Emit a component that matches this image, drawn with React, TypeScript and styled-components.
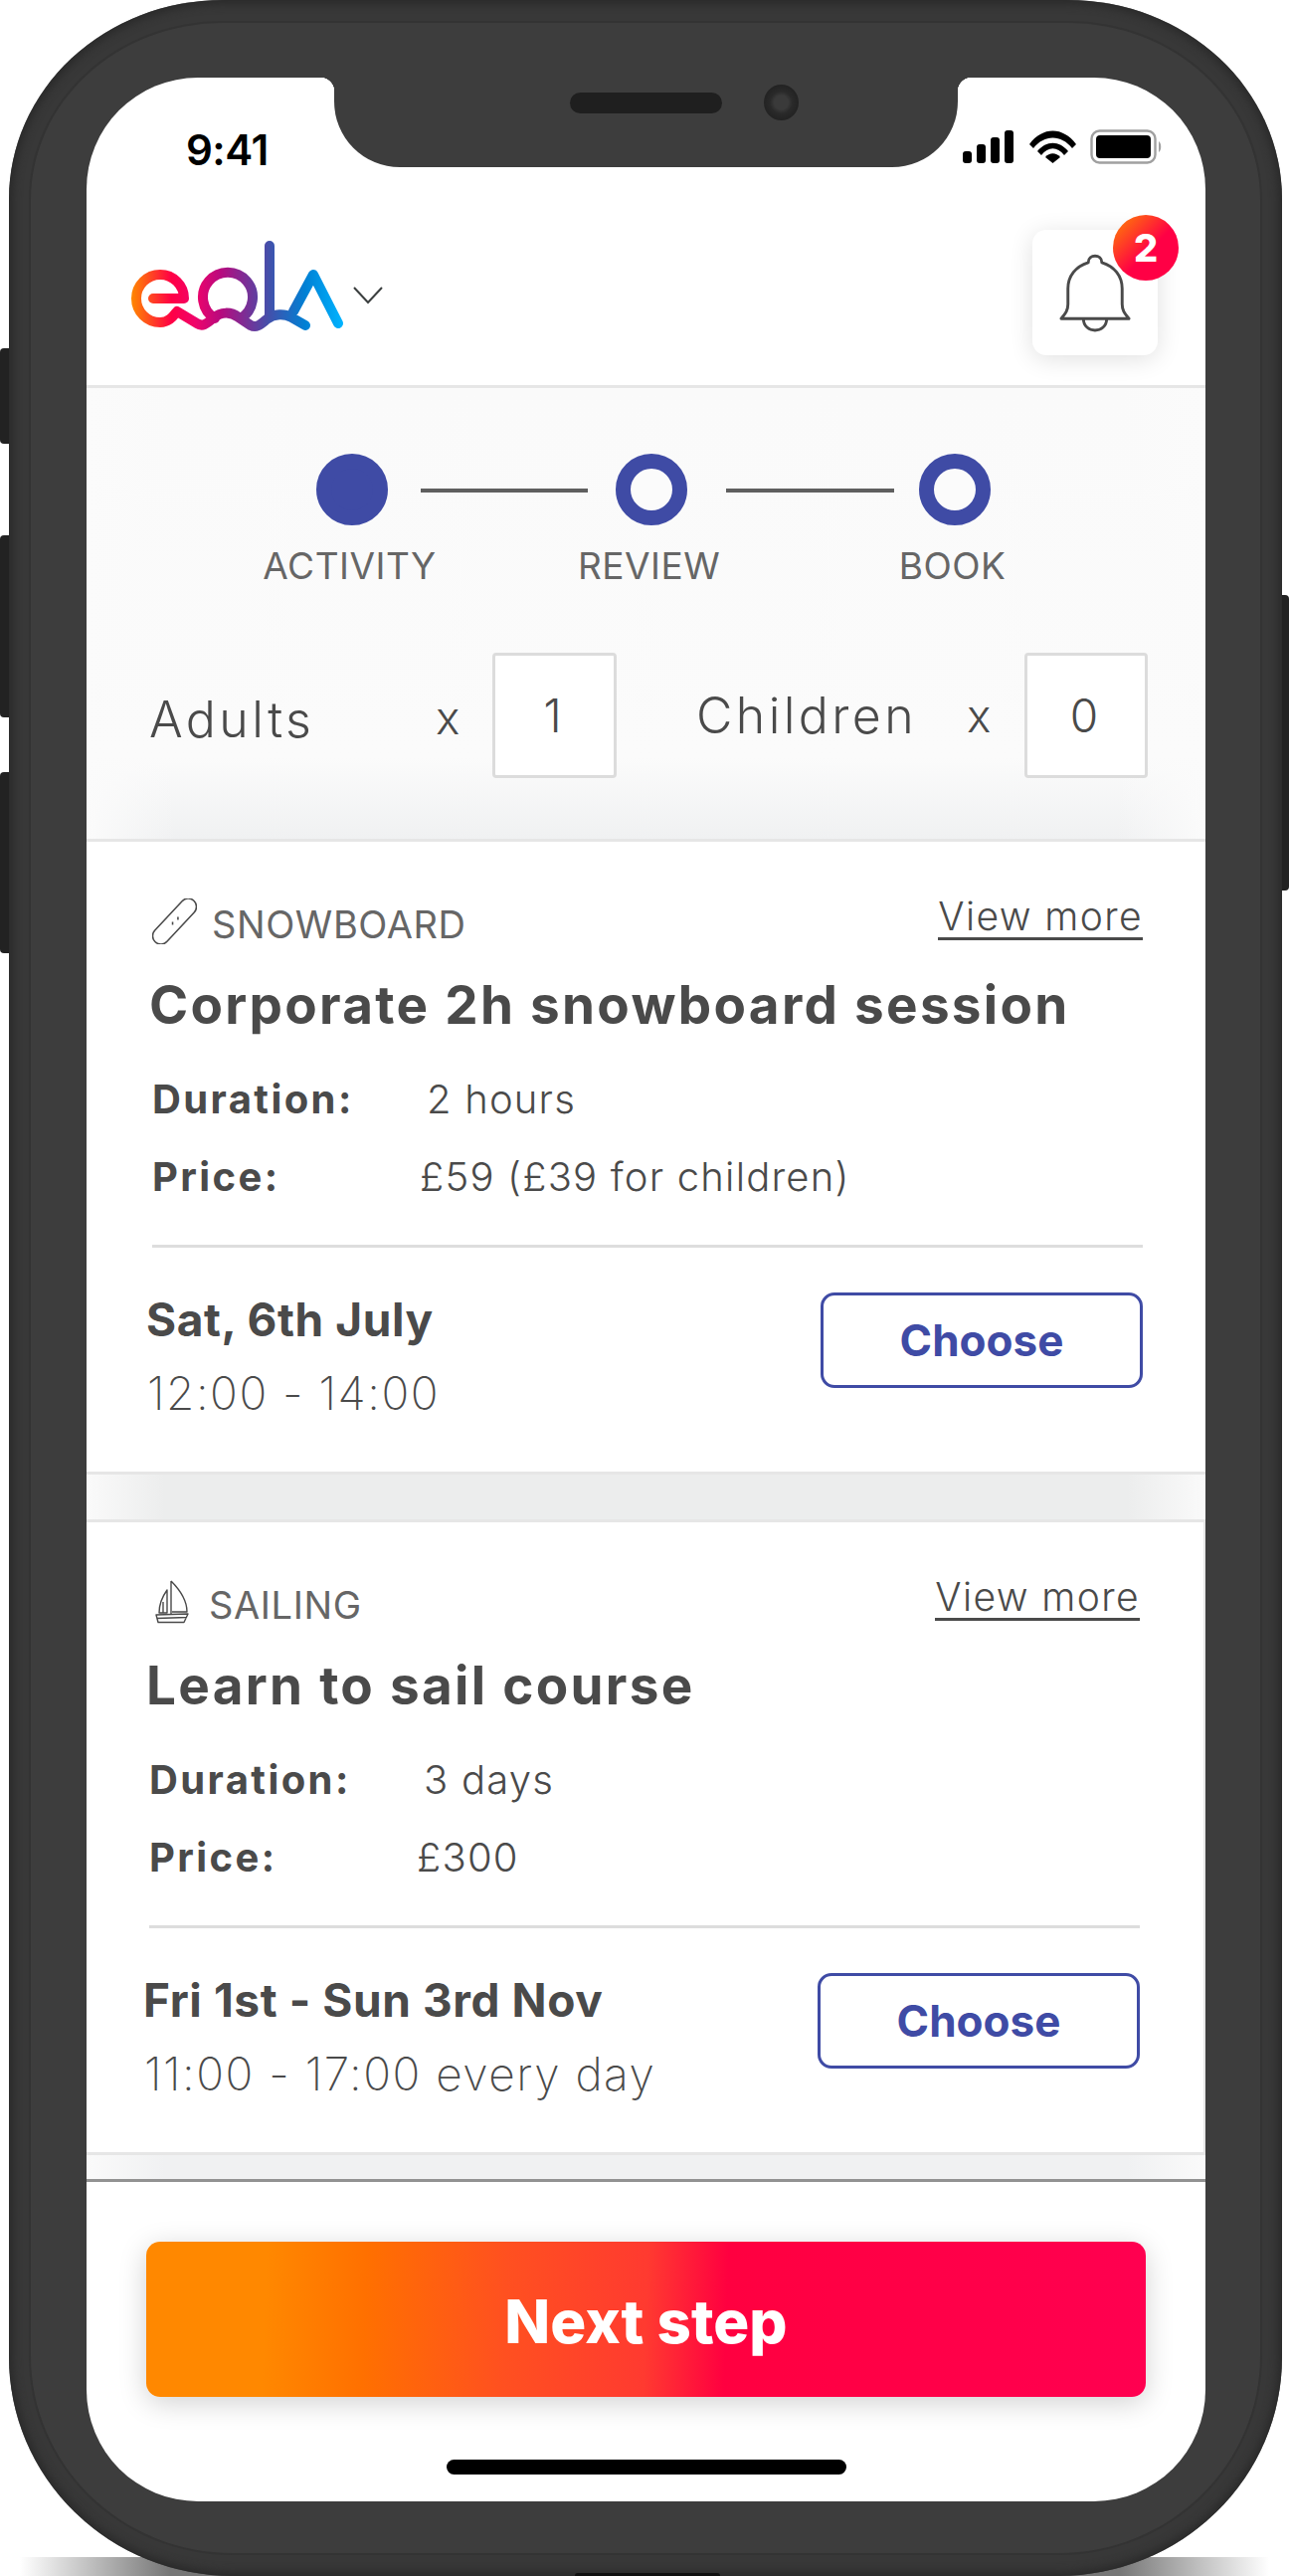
import React from "react";
import styled, { createGlobalStyle } from "styled-components";

const Global = createGlobalStyle`
  html, body { margin: 0; padding: 0; background: #fff; }
  body { width: 1296px; height: 2589px; overflow: hidden; font-family: Inter, "Liberation Sans", sans-serif; }
  * { box-sizing: border-box; }
`;

const Logo = () => (
  <svg width="220" height="95" viewBox="20 30 220 95" fill="none">
    <defs>
      <linearGradient id="eola" gradientUnits="userSpaceOnUse" x1="22" x2="235" y1="0" y2="0">
        <stop offset="0" stopColor="#ff8800" />
        <stop offset="0.19" stopColor="#ff0045" />
        <stop offset="0.3" stopColor="#f0046a" />
        <stop offset="0.42" stopColor="#b80a7e" />
        <stop offset="0.65" stopColor="#4350ab" />
        <stop offset="0.82" stopColor="#0080d4" />
        <stop offset="1" stopColor="#00b4ff" />
      </linearGradient>
    </defs>
    <path
      stroke="url(#eola)"
      strokeWidth="10"
      strokeLinecap="round"
      strokeLinejoin="round"
      d="M44 90H75A24 24 0 1 0 51 114C60 114 64 108 68 103L88 115C94 119 98 115 104 110C112 103 122 103 130 109L142 117C148 120 152 116 158 111C166 105 176 105 183 109L197 117M106 110A25 25 0 1 1 132 110M161 37V106M185 103L205 66L230 115"
    />
  </svg>
);

const Bell = () => (
  <svg width="72" height="80" viewBox="0 0 74 80" fill="none" stroke="#4a4a4a" strokeWidth="3" strokeLinejoin="round">
    <path d="M30 9C30 0 44 0 44 9C57 13 65 23 65 36V52C65 59 68 62 72 67H2C6 62 9 59 9 52V36C9 23 17 13 30 9Z" />
    <path d="M25 67C25 83 49 83 49 67" />
  </svg>
);

const Snowboard = () => (
  <svg width="46" height="46" viewBox="0 0 46 46" fill="none" stroke="#4a4a4a" strokeWidth="1.6" strokeLinejoin="round">
    <rect x="-29" y="-8.5" width="58" height="17" rx="8.5" transform="translate(23 23) rotate(-47)" />
    <path d="M21 23.5V26.5M26.5 18.5V21.5" />
  </svg>
);

const Sailboat = () => (
  <svg width="34" height="44" viewBox="0 0 34 44" fill="none" stroke="#4a4a4a" strokeWidth="1.4" strokeLinejoin="round">
    <path d="M16 1V34M16 1C25 10 32 20 32 32H17M12 10C7 17 4 25 4 33H12ZM8 22V33" />
    <path d="M1 35L33 34L29 42.5H3ZM1.5 38.5L32 37.5" />
  </svg>
);

const Signal = () => (
  <svg width="52" height="33" viewBox="0 0 52 33" fill="#000">
    <rect x="0" y="21" width="9" height="12" rx="3" />
    <rect x="14" y="14" width="9" height="19" rx="3" />
    <rect x="28" y="7" width="9" height="26" rx="3" />
    <rect x="42" y="0" width="9" height="33" rx="3" />
  </svg>
);

const Wifi = () => (
  <svg width="47" height="33" viewBox="0 0 47 33" fill="#000">
    <path d="M0 14C13 -4 34 -4 47 14L43 18C32 4 15 4 4 18Z" />
    <path d="M8 21C17 10 30 10 39 21L35 25C28 16 19 16 12 25Z" />
    <path d="M16 27C20 22 27 22 31 27L23.5 33Z" />
  </svg>
);

const Battery = () => (
  <svg width="72" height="35" viewBox="0 0 72 35">
    <rect x="1.5" y="1.5" width="64" height="32" rx="8" fill="none" stroke="#a0a0a0" strokeWidth="2.4" />
    <rect x="6" y="6" width="55" height="23" rx="4" fill="#000" />
    <path d="M69 12C72 14 72 21 69 23Z" fill="#a0a0a0" />
  </svg>
);

type Activity = {
  category: string;
  icon: React.ReactNode;
  title: string;
  duration: string;
  price: string;
  date: string;
  time: string;
};

const activities: Activity[] = [
  {
    category: "SNOWBOARD",
    icon: <Snowboard />,
    title: "Corporate 2h snowboard session",
    duration: "2 hours",
    price: "£59 (£39 for children)",
    date: "Sat, 6th July",
    time: "12:00 - 14:00",
  },
  {
    category: "SAILING",
    icon: <Sailboat />,
    title: "Learn to sail course",
    duration: "3 days",
    price: "£300",
    date: "Fri 1st - Sun 3rd Nov",
    time: "11:00 - 17:00 every day",
  },
];

const ActivityCard = ({ item, second }: { item: Activity; second?: boolean }) => (
  <Card $second={second}>
    <CardTop>
      <Category>
        <CategoryIcon>{item.icon}</CategoryIcon>
        {item.category}
      </Category>
      <ViewMore>View more</ViewMore>
    </CardTop>
    <CardTitle>{item.title}</CardTitle>
    <Detail>
      <DetailLabel>Duration:</DetailLabel>
      <DurationValue>{item.duration}</DurationValue>
    </Detail>
    <Detail>
      <DetailLabel>Price:</DetailLabel>
      <DetailValue>{item.price}</DetailValue>
    </Detail>
    <Divider />
    <Slot>
      <div>
        <SlotDate>{item.date}</SlotDate>
        <SlotTime>{item.time}</SlotTime>
      </div>
      <Choose>Choose</Choose>
    </Slot>
  </Card>
);

const App = () => (
  <>
    <Global />
    <Page>
      <BottomShadow />
      <BottomGrille />
      <SideButton $side="left" $top={350} $height={96} />
      <SideButton $side="left" $top={538} $height={183} />
      <SideButton $side="left" $top={776} $height={182} />
      <SideButton $side="right" $top={598} $height={297} />
      <Phone>
        <Screen>
          <Notch>
            <Speaker />
            <Camera />
          </Notch>
          <StatusBar>
            <Clock>9:41</Clock>
            <StatusIcons>
              <Signal />
              <Wifi />
              <Battery />
            </StatusIcons>
          </StatusBar>
          <Header>
            <LogoRow>
              <Logo />
              <Chevron viewBox="0 0 30 18" width="30" height="18">
                <path d="M1 1L15 16L29 1" fill="none" stroke="#3b3f3f" strokeWidth="2" />
              </Chevron>
            </LogoRow>
            <BellCard>
              <Bell />
              <Badge>2</Badge>
            </BellCard>
          </Header>
          <Filters>
            <Steps>
              <Step>
                <StepDot $active />
                <StepLabel>ACTIVITY</StepLabel>
              </Step>
              <StepLine />
              <Step>
                <StepDot />
                <StepLabel>REVIEW</StepLabel>
              </Step>
              <StepLine $short />
              <Step>
                <StepDot />
                <StepLabel>BOOK</StepLabel>
              </Step>
            </Steps>
            <Guests>
              <GuestLabel $width={288} $down>Adults</GuestLabel>
              <Times>x</Times>
              <CountBox $width={125}>1</CountBox>
              <GuestLabel $width={272} $gap={80}>Children</GuestLabel>
              <Times $up>x</Times>
              <CountBox $width={124}>0</CountBox>
            </Guests>
          </Filters>
          <ActivityCard item={activities[0]} />
          <CardGap />
          <ActivityCard item={activities[1]} second />
          <ListEnd />
          <Footer>
            <NextStep>Next step</NextStep>
            <HomeBar />
          </Footer>
        </Screen>
      </Phone>
    </Page>
  </>
);

export default App;

const Page = styled.div`
  position: relative;
  width: 1296px;
  height: 2589px;
  padding: 0 0 0 9px;
  overflow: hidden;
`;

const BottomShadow = styled.div`
  position: absolute;
  left: 20px;
  right: 20px;
  bottom: 0;
  height: 19px;
  background: linear-gradient(90deg, transparent, #777 12%, #777 88%, transparent);
`;

const BottomGrille = styled.div`
  position: absolute;
  z-index: 2;
  left: 578px;
  bottom: 0;
  width: 146px;
  height: 3px;
  background: #111;
  border-radius: 3px 3px 0 0;
`;

const SideButton = styled.div<{ $side: "left" | "right"; $top: number; $height: number }>`
  position: absolute;
  top: ${(p) => p.$top}px;
  height: ${(p) => p.$height}px;
  width: 14px;
  ${(p) => (p.$side === "left" ? "left: 0;" : "right: 0;")}
  background: #222;
  border-radius: 4px;
`;

const Phone = styled.div`
  position: relative;
  width: 1280px;
  height: 2589px;
  padding: 78px 77px 75px 78px;
  background: #383838;
  border-radius: 215px 215px 225px 225px / 200px 200px 220px 220px;
  box-shadow: inset 0 0 9px 4px #2a2a2a;
  &::before {
    content: "";
    position: absolute;
    inset: 21px 20px 21px 20px;
    background: #3d3d3d;
    border: 2px solid #333;
    border-radius: 195px 195px 205px 205px / 180px 180px 200px 200px;
  }
`;

const Screen = styled.div`
  position: relative;
  width: 1125px;
  height: 2436px;
  background: #fff;
  border-radius: 112px;
  overflow: hidden;
  color: #4a4a4a;
`;

const Notch = styled.div`
  position: absolute;
  top: 0;
  left: 249px;
  width: 627px;
  height: 90px;
  display: flex;
  align-items: flex-start;
  padding: 15px 0 0 237px;
  gap: 42px;
  background: #3d3d3d;
  border-radius: 0 0 66px 66px;
  &::before, &::after {
    content: "";
    position: absolute;
    top: 0;
    width: 14px;
    height: 14px;
  }
  &::before { left: -14px; background: radial-gradient(circle at 0 100%, transparent 14px, #3d3d3d 14.5px); }
  &::after { right: -14px; background: radial-gradient(circle at 100% 100%, transparent 14px, #3d3d3d 14.5px); }
`;

const Speaker = styled.div`
  width: 153px;
  height: 21px;
  background: #1f1f1f;
  border-radius: 11px;
`;

const Camera = styled.div`
  width: 35px;
  height: 36px;
  margin-top: -8px;
  background: radial-gradient(circle, #3a3a3a 0 7px, #2a2a2a 11px, #222 18px);
  border-radius: 50%;
`;

const StatusBar = styled.div`
  height: 108px;
  display: flex;
  justify-content: space-between;
  align-items: flex-start;
  padding: 47px 44px 0 100px;
`;

const Clock = styled.div`
  font-size: 42px;
  line-height: 51px;
  font-weight: 600;
  color: #000;
  letter-spacing: -0.5px;
`;

const StatusIcons = styled.div`
  display: flex;
  align-items: center;
  gap: 14.5px;
  padding-top: 5px;
`;

const Header = styled.div`
  height: 204px;
  display: flex;
  justify-content: space-between;
  align-items: flex-start;
  padding: 45px 48px 0 43px;
  border-bottom: 3px solid #e6e6e6;
`;

const LogoRow = styled.div`
  display: flex;
  align-items: flex-start;
  margin-top: 9px;
`;

const Chevron = styled.svg`
  margin: 48px 0 0 5px;
`;

const BellCard = styled.div`
  position: relative;
  width: 126px;
  height: 126px;
  display: flex;
  align-items: center;
  justify-content: center;
  background: #fff;
  border-radius: 14px;
  box-shadow: 0 4px 24px rgba(0, 0, 0, 0.12);
`;

const Badge = styled.div`
  position: absolute;
  top: -15px;
  right: -21px;
  width: 66px;
  height: 66px;
  display: flex;
  align-items: center;
  justify-content: center;
  border-radius: 50%;
  background: linear-gradient(135deg, #ff8800 0%, #ff0045 55%);
  color: #fff;
  font-size: 38px;
  font-weight: 800;
`;

const Filters = styled.div`
  height: 456px;
  padding: 66px 0 0 0;
  background:
    linear-gradient(90deg, #fbfbfb 0%, transparent 8%, transparent 92%, #fbfbfb 100%),
    linear-gradient(#fafafa 0%, #fbfbfb 82%, #f0f1f2 100%);
  border-bottom: 3px solid #e6e6e6;
`;

const Steps = styled.div`
  display: flex;
  align-items: flex-start;
  padding-left: 231px;
`;

const Step = styled.div`
  width: 72px;
  display: flex;
  flex-direction: column;
  align-items: center;
`;

const StepDot = styled.div<{ $active?: boolean }>`
  width: 72px;
  height: 72px;
  border-radius: 50%;
  border: 15px solid #3f4ba5;
  background: ${(p) => (p.$active ? "#3f4ba5" : "#fbfbfb")};
`;

const StepLabel = styled.div`
  margin: 19px 5px 0 0;
  font-size: 37px;
  line-height: 44px;
  letter-spacing: 0.5px;
  color: #666;
  white-space: nowrap;
`;

const StepLine = styled.div<{ $short?: boolean }>`
  width: ${(p) => (p.$short ? 169 : 168)}px;
  height: 4px;
  margin: 35px ${(p) => (p.$short ? 25 : 28)}px 0 ${(p) => (p.$short ? 39 : 33)}px;
  background: #5f5f5f;
`;

const Guests = styled.div`
  display: flex;
  align-items: center;
  margin-top: 65px;
  padding-left: 63px;
`;

const GuestLabel = styled.div<{ $width: number; $gap?: number; $down?: boolean }>`
  width: ${(p) => p.$width}px;
  margin-left: ${(p) => p.$gap ?? 0}px;
  padding-top: ${(p) => (p.$down ? 8 : 0)}px;
  font-size: 50px;
  letter-spacing: 3.4px;
  font-weight: 300;
  color: #4a4a4a;
  white-space: nowrap;
`;

const Times = styled.div<{ $up?: boolean }>`
  width: ${(p) => (p.$up ? 58 : 57)}px;
  padding-top: ${(p) => (p.$up ? 0 : 4)}px;
  font-size: 46px;
  font-weight: 300;
`;

const CountBox = styled.div<{ $width: number }>`
  width: ${(p) => p.$width}px;
  height: 126px;
  display: flex;
  align-items: center;
  justify-content: center;
  background: #fff;
  border: 3px solid #dcdcdc;
  border-radius: 4px;
  font-size: 46px;
  font-weight: 300;
  padding-right: 4px;
`;

const Card = styled.div<{ $second?: boolean }>`
  height: 636px;
  padding: 49px ${(p) => (p.$second ? 64 : 63)}px 0 ${(p) => (p.$second ? 60 : 63)}px;
  background: #fff;
  border-bottom: 3px solid #e6e6e6;
  ${(p) => p.$second && "border-right: 2px solid #e6e6e6;"}
`;

const CardTop = styled.div`
  display: flex;
  justify-content: space-between;
  align-items: flex-start;
  height: 59px;
`;

const Category = styled.div`
  display: flex;
  align-items: center;
  gap: 15px;
  font-size: 38px;
  line-height: 52px;
  letter-spacing: 0.6px;
  color: #666;
  padding: 8px 0 0 3px;
`;

const CategoryIcon = styled.span`
  display: flex;
  width: 45px;
  justify-content: center;
  margin-top: -7px;
`;

const ViewMore = styled.div`
  font-size: 39px;
  line-height: 42px;
  letter-spacing: 1.4px;
  font-weight: 300;
  color: #4a4a4a;
  border-bottom: 3px solid #4a4a4a;
  margin-top: 5px;
`;

const CardTitle = styled.div`
  margin: 21px 0 20px;
  font-size: 53px;
  line-height: 70px;
  letter-spacing: 2.3px;
  font-weight: 700;
  color: #4a4a4a;
  white-space: nowrap;
`;

const Detail = styled.div`
  display: flex;
  align-items: center;
  height: 78px;
  padding-left: 3px;
  font-size: 40px;
`;

const DetailLabel = styled.div`
  width: 270px;
  font-weight: 700;
  letter-spacing: 2.4px;
`;

const DetailValue = styled.div`
  font-weight: 300;
  letter-spacing: 1.2px;
  white-space: nowrap;
  margin-left: -1px;
`;

const DurationValue = styled(DetailValue)`
  margin-left: 6px;
`;

const Divider = styled.div`
  height: 3px;
  margin: 30px 0 0 3px;
  background: #ddd;
`;

const Slot = styled.div`
  display: flex;
  justify-content: space-between;
  align-items: flex-start;
  margin-top: 45px;
`;

const SlotDate = styled.div`
  font-size: 46px;
  line-height: 58px;
  font-weight: 700;
  letter-spacing: 0.6px;
  margin: -2px 0 0 -3px;
`;

const SlotTime = styled.div`
  margin: 16px 0 0 -2px;
  font-size: 46px;
  line-height: 58px;
  font-weight: 200;
  letter-spacing: 1.5px;
  white-space: nowrap;
`;

const Choose = styled.div`
  width: 324px;
  height: 96px;
  display: flex;
  align-items: center;
  justify-content: center;
  border: 3px solid #3f4ba5;
  border-radius: 14px;
  color: #3f4ba5;
  font-size: 44px;
  font-weight: 700;
`;

const CardGap = styled.div`
  height: 48px;
  background: linear-gradient(90deg, #fafafa 0%, #eceded 7%, #eceded 93%, #fafafa 100%);
  border-bottom: 3px solid #e6e6e6;
`;

const ListEnd = styled.div`
  height: 27px;
  background: linear-gradient(90deg, #fafafa 0%, #f0f1f2 7%, #f0f1f2 93%, #fafafa 100%);
  border-bottom: 3px solid #929292;
`;

const Footer = styled.div`
  display: flex;
  flex-direction: column;
  align-items: center;
  padding-top: 60px;
`;

const NextStep = styled.div`
  width: 1005px;
  height: 156px;
  display: flex;
  align-items: center;
  justify-content: center;
  padding-top: 3px;
  border-radius: 14px;
  background: linear-gradient(92deg, #ff8800 0%, #ff8800 12%, #ff7000 22%, #ff5020 36%, #ff3a30 50%, #ff0040 58%, #ff0050 100%);
  box-shadow: 0 6px 28px rgba(0, 0, 0, 0.18);
  color: #fff;
  font-size: 60px;
  font-weight: 800;
`;

const HomeBar = styled.div`
  width: 402px;
  height: 15px;
  margin-top: 63px;
  background: #000;
  border-radius: 8px;
`;
